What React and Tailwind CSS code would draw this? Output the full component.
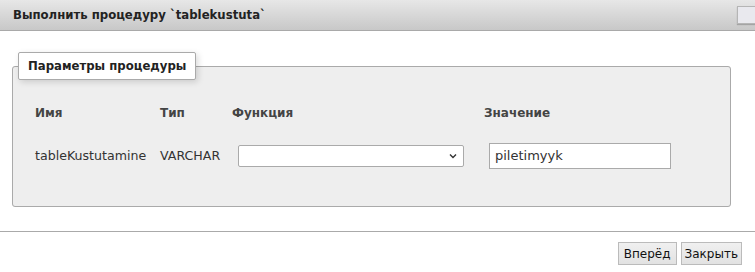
export default function App() {
  const font = { fontFamily: '"DejaVu Sans", Verdana, sans-serif' };
  const cond = { fontFamily: '"DejaVu Sans Condensed", "DejaVu Sans", sans-serif' };
  return (
    <div className="w-[755px] h-[272px] bg-white overflow-hidden relative text-[#333]" style={font}>
      {/* заголовок диалога */}
      <div className="relative h-[31px] flex items-center px-[13px] bg-gradient-to-b from-[#e7e7e7] to-[#c8c8c8] border-b border-[#a9a9a9]">
        <span className="text-[13px] font-bold text-[#222]" style={cond}>Выполнить процедуру `tablekustuta`</span>
        <div className="absolute top-[6px] left-[737px] w-[22px] h-[18px] bg-[#e9e9ee] border border-[#b5b5b5] shadow-[0_1px_1px_rgba(0,0,0,0.2)]" />
      </div>

      {/* параметры */}
      <fieldset className="mt-[21px] ml-[12px] w-[719px] h-[155px] border border-[#aaa] rounded-[3px] bg-[#eeeeee]">
        <legend className="ml-[5px] px-[9px] h-[28px] flex items-center bg-white border border-[#aaa] rounded-[2px] shadow-[2px_2px_6px_rgba(0,0,0,0.15)] text-[13px] font-bold text-[#222]" style={cond}>
          Параметры процедуры
        </legend>
        <div className="grid grid-cols-[125px_72px_252px_200px] pl-[22px] pt-[23px] text-[12px]">
          <div className="font-bold text-[#444] h-[20px] flex items-center">Имя</div>
          <div className="font-bold text-[#444] h-[20px] flex items-center">Тип</div>
          <div className="font-bold text-[#444] h-[20px] flex items-center">Функция</div>
          <div className="font-bold text-[#444] h-[20px] flex items-center">Значение</div>

          <div className="h-[26px] mt-[20px] flex items-center text-[12.6px]">tableKustutamine</div>
          <div className="h-[26px] mt-[20px] flex items-center text-[12.6px]">VARCHAR</div>
          <div className="h-[26px] mt-[20px] flex items-center">
            <div className="ml-[6px] w-[226px] h-[22px] bg-white border border-[#aaa] rounded-[2px] flex items-center justify-end pr-[6px]">
              <svg width="8" height="6" viewBox="0 0 8 6" fill="none" stroke="#333" strokeWidth="1.4">
                <path d="M1 1.5 L4 4.5 L7 1.5" />
              </svg>
            </div>
          </div>
          <div className="h-[26px] mt-[20px] flex items-center">
            <div className="ml-[5px] w-[182px] h-[26px] bg-white border border-[#aaa] flex items-center px-[5px] text-[13px]">
              piletimyyk
            </div>
          </div>
        </div>
      </fieldset>

      {/* кнопки */}
      <div className="mt-[24px] border-t border-[#aaa]" />
      <div className="flex justify-end gap-[4px] pr-[13px] pt-[10px]">
        <button className="h-[23px] px-[5px] bg-gradient-to-b from-[#f0f0f0] to-[#e2e2e2] border border-[#bbb] text-[12px] text-[#111]">Вперёд</button>
        <button className="h-[23px] px-[3px] bg-gradient-to-b from-[#f0f0f0] to-[#e2e2e2] border border-[#bbb] text-[12px] text-[#111]">Закрыть</button>
      </div>
    </div>
  );
}
